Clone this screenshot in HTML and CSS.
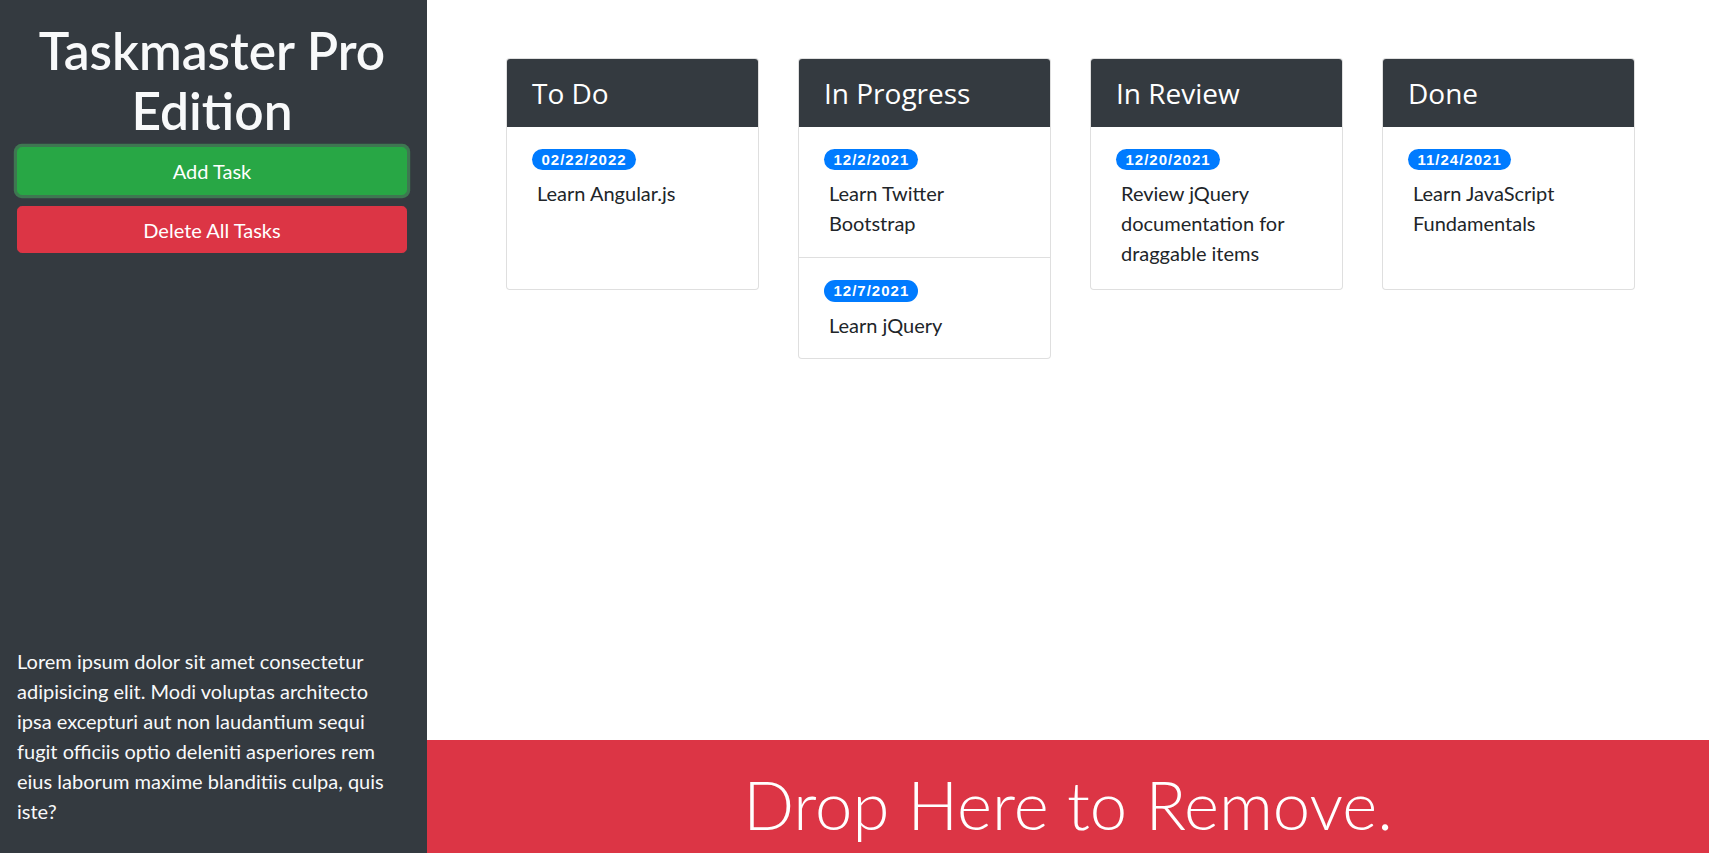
FILE: index.html
```html
<!DOCTYPE html>
<html lang="en">
<head>
<meta charset="utf-8">
<title>Taskmaster Pro</title>
<link rel="stylesheet" href="styles.css">
</head>
<body>
<div class="app">
  <aside class="sidebar">
    <h1 class="brand">Taskmaster Pro Edition</h1>
    <button class="btn btn-add" type="button">Add Task</button>
    <button class="btn btn-delete" type="button">Delete All Tasks</button>
    <p class="blurb">Lorem ipsum dolor sit amet consectetur adipisicing elit. Modi voluptas architecto ipsa excepturi aut non laudantium sequi fugit officiis optio deleniti asperiores rem eius laborum maxime blanditiis culpa, quis iste?</p>
  </aside>
  <main class="board">
    <div class="lists">
      <section class="card">
        <h3 class="card-header">To Do</h3>
        <ul class="task-list">
          <li class="task"><span class="badge">02/22/2022</span><p class="task-text">Learn Angular.js</p></li>
        </ul>
      </section>
      <section class="card">
        <h3 class="card-header">In Progress</h3>
        <ul class="task-list">
          <li class="task"><span class="badge">12/2/2021</span><p class="task-text">Learn Twitter Bootstrap</p></li>
          <li class="task"><span class="badge">12/7/2021</span><p class="task-text">Learn jQuery</p></li>
        </ul>
      </section>
      <section class="card">
        <h3 class="card-header">In Review</h3>
        <ul class="task-list">
          <li class="task"><span class="badge">12/20/2021</span><p class="task-text">Review jQuery documentation for draggable items</p></li>
        </ul>
      </section>
      <section class="card">
        <h3 class="card-header">Done</h3>
        <ul class="task-list">
          <li class="task"><span class="badge">11/24/2021</span><p class="task-text">Learn JavaScript Fundamentals</p></li>
        </ul>
      </section>
    </div>
    <div class="trash">Drop Here to Remove.</div>
  </main>
</div>
</body>
</html>
```
FILE: styles.css
```css
html, body {
  margin: 0;
  height: 100%;
}
body {
  font-family: Lato, "Liberation Sans", sans-serif;
  color: #212529;
  background: #fff;
}
*, *::before, *::after { box-sizing: border-box; }

.app {
  display: grid;
  grid-template-columns: 427px 1fr;
  height: 100vh;
  overflow: hidden;
}

/* Sidebar */
.sidebar {
  background: #343a40;
  color: #f8f9fa;
  display: flex;
  flex-direction: column;
  padding: 20px 20px 0 17px;
}
.brand {
  margin: 0 0 7px;
  font-size: 51.5px;
  line-height: 60px;
  font-weight: 600;
  text-align: center;
  color: #f8f9fa;
}
.btn {
  display: block;
  width: 100%;
  font-family: inherit;
  font-size: 20px;
  line-height: 30px;
  padding: 8px 16px;
  border: 1px solid transparent;
  border-radius: 4.8px;
  color: #fff;
  text-align: center;
  cursor: pointer;
}
.btn-add {
  background: #28a745;
  border-color: #28a745;
  box-shadow: 0 0 0 3.2px rgba(72, 180, 97, 0.5);
}
.btn-delete {
  background: #dc3545;
  border-color: #dc3545;
  margin-top: 11px;
  height: 47px;
  padding-top: 7.5px;
}
.blurb {
  margin: auto 10px 27px 0;
  font-size: 20px;
  line-height: 30px;
}

/* Board */
.board {
  display: flex;
  flex-direction: column;
  min-width: 0;
}
.lists {
  flex: 1;
  display: grid;
  grid-template-columns: repeat(4, 1fr);
  column-gap: 39px;
  align-items: start;
  padding: 58px 74px 0 79px;
}
.card {
  border: 1px solid rgba(0, 0, 0, 0.125);
  border-radius: 4px;
  overflow: hidden;
  background: #fff;
}
.card-header {
  margin: 0;
  background: #343a40;
  color: #fff;
  font-family: "Open Sans", Lato, sans-serif;
  font-weight: 400;
  font-size: 28px;
  line-height: 33.6px;
  padding: 17.5px 24px 16.5px 25px;
}
.task-list {
  list-style: none;
  margin: 0;
  padding: 0;
  min-height: 162px;
}
.task {
  display: flex;
  flex-direction: column;
  align-items: flex-start;
  padding: 22.5px 25px 18.5px;
  border-bottom: 1px solid rgba(0, 0, 0, 0.125);
}
.task:last-child { border-bottom: 0; }
.badge {
  display: block;
  height: 21.4px;
  line-height: 21.4px;
  padding: 0 9px 0 9.5px;
  border-radius: 10rem;
  background: #007bff;
  color: #fff;
  font-family: "Liberation Sans", Arial, sans-serif;
  font-weight: 700;
  font-size: 15px;
  letter-spacing: 1px;
}
.task-text {
  margin: 8px 0 0 5px;
  font-size: 20px;
  line-height: 30px;
}

/* Trash drop zone */
.trash {
  height: 113px;
  padding-top: 24px;
  background: #dc3545;
  color: #fff;
  text-align: center;
  font-weight: 300;
  font-size: 67px;
  line-height: 80px;
  white-space: nowrap;
}
```
